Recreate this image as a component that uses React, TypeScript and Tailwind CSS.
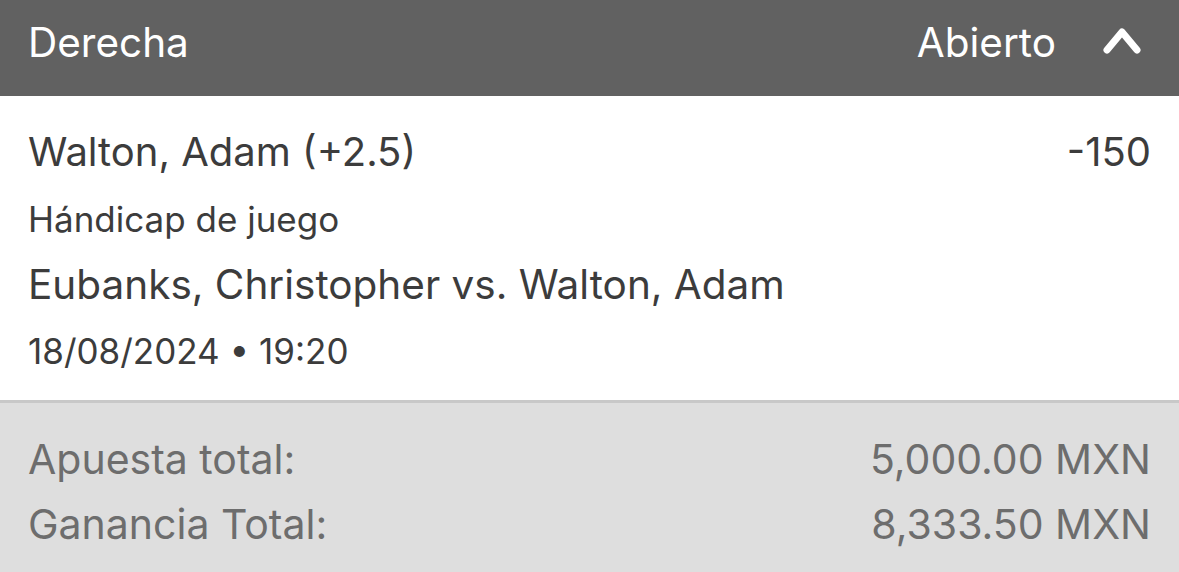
const font = { fontFamily: "Inter, 'Noto Sans', sans-serif" };

function ChevronUp() {
  return (
    <svg width="40" height="28" viewBox="0 0 40 28" fill="none" className="mb-[4px]">
      <polyline
        points="5,23 20,5 35,23"
        stroke="white"
        strokeWidth="7"
        strokeLinecap="round"
        strokeLinejoin="round"
      />
    </svg>
  );
}

function Row({ label, value }: { label: string; value: string }) {
  return (
    <div className="flex items-center justify-between text-[41px] leading-[65px] text-[#6d6d6d]">
      <span>{label}</span>
      <span>{value}</span>
    </div>
  );
}

export default function App() {
  return (
    <div className="w-[1179px] h-[572px] bg-[#dedede] overflow-hidden" style={font}>
      <div className="h-[96px] bg-[#616161] flex items-center justify-between pl-[28px] pr-[37px] pb-[11px] text-white text-[40.5px] leading-[48px]">
        <span>Derecha</span>
        <div className="flex items-center gap-[46px]">
          <span>Abierto</span>
          <ChevronUp />
        </div>
      </div>

      <div className="bg-white px-[28px] pt-[32px] pb-[28px] text-[#3c3c3c]">
        <div className="flex justify-between text-[40px] leading-[48px]">
          <span>Walton, Adam (+2.5)</span>
          <span>-150</span>
        </div>
        <div className="text-[35px] leading-[42px] mt-[22px]">Hándicap de juego</div>
        <div className="text-[40.5px] leading-[48px] mt-[21px]">
          Eubanks, Christopher vs. Walton, Adam
        </div>
        <div className="text-[35px] leading-[42px] mt-[21px]">18/08/2024 • 19:20</div>
      </div>

      <div className="border-t-[3px] border-[#c8c8c8] px-[28px] pt-[24px]">
        <Row label="Apuesta total:" value="5,000.00 MXN" />
        <Row label="Ganancia Total:" value="8,333.50 MXN" />
      </div>
    </div>
  );
}
